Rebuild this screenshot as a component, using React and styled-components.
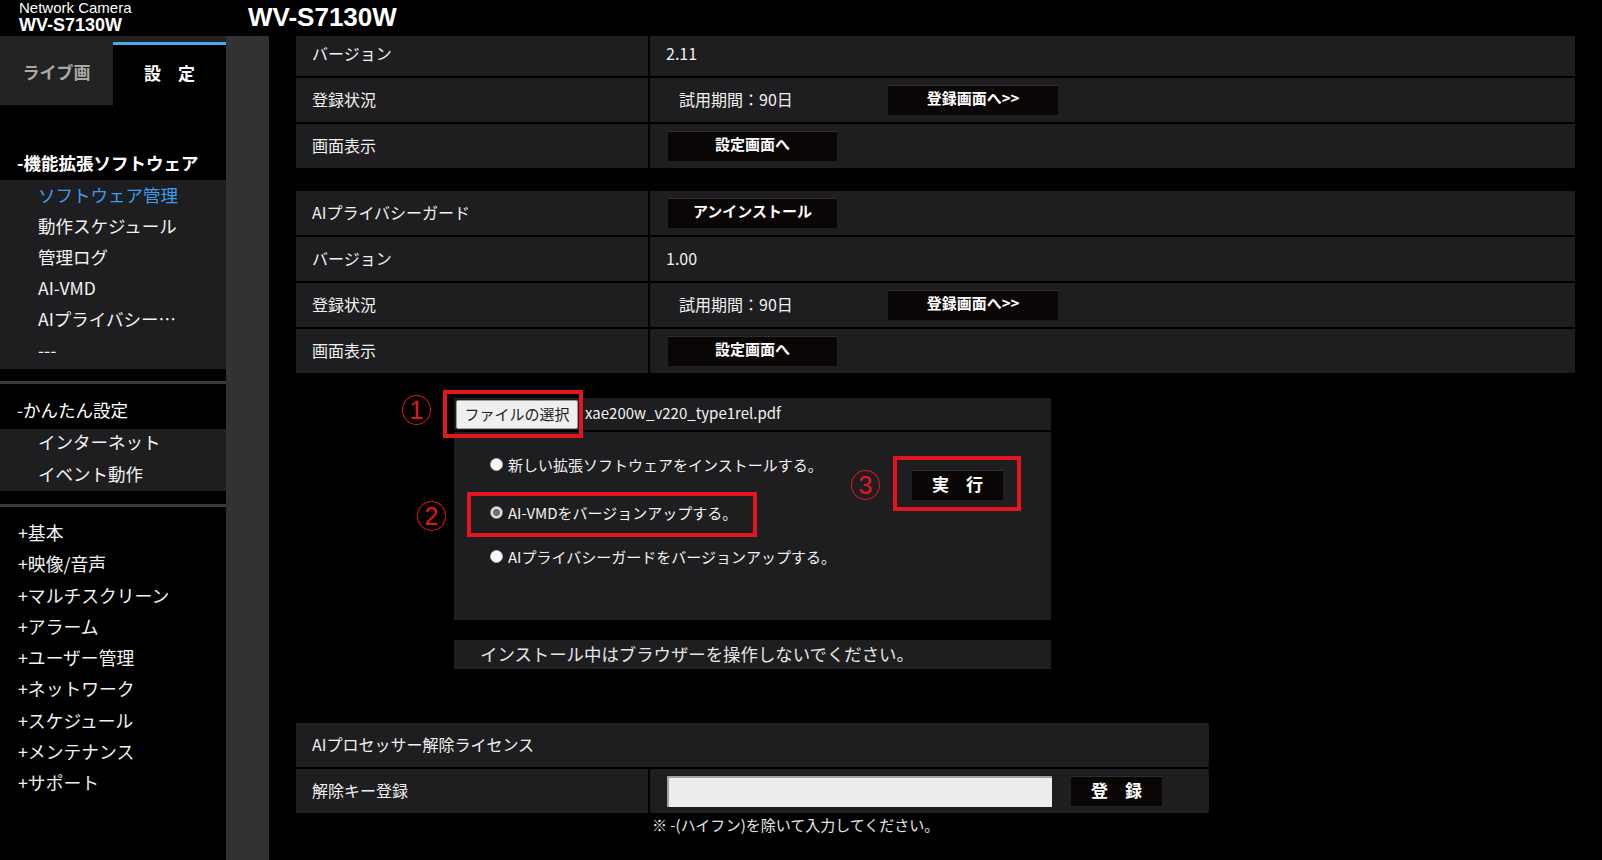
import React from "react";
import styled, { createGlobalStyle } from "styled-components";

const GlobalStyle = createGlobalStyle`
  html, body { margin: 0; padding: 0; background: #000; }
  body {
    font-family: "Noto Sans CJK JP", "Noto Sans", sans-serif;
    color: #f2f2f2;
  }
  * { box-sizing: border-box; }
`;

const RED = "#e3161f";
const CELL = "#1e1e20";

const Page = styled.div`
  height: 860px;
  display: flex;
  flex-direction: column;
  overflow: hidden;
  background: #000;
`;

const Header = styled.header`
  height: 36px;
  flex: none;
  display: flex;
  background: #000;
`;

const Brand = styled.div`
  width: 248px;
  padding-left: 19px;
  color: #fff;
  font-family: "Liberation Sans", Arial, sans-serif;
`;

const BrandSub = styled.div`
  font-size: 15px;
  line-height: 15px;
`;

const BrandModel = styled.div`
  margin-top: 1px;
  font-size: 18px;
  line-height: 18px;
  font-weight: bold;
`;

const Title = styled.h1`
  margin: 0;
  font-family: "Liberation Sans", Arial, sans-serif;
  font-size: 26px;
  line-height: 35px;
  font-weight: bold;
  color: #fff;
`;

const Body = styled.div`
  flex: 1;
  display: flex;
  min-height: 0;
`;

const Sidebar = styled.aside`
  width: 226px;
  flex: none;
  background: #000;
  display: flex;
  flex-direction: column;
`;

const TabBar = styled.div`
  display: flex;
  background: #222;
  padding-top: 6px;
`;

const Tab = styled.div`
  width: 113px;
  height: 63px;
  display: flex;
  align-items: center;
  justify-content: center;
  padding-bottom: ${(p) => (p.$active ? 6 : 4)}px;
  font-size: 17px;
  font-weight: bold;
  white-space: pre;
  background: ${(p) => (p.$active ? "#000" : "#222")};
  border-top: ${(p) => (p.$active ? "3px solid #4aa8ea" : "none")};
  color: ${(p) => (p.$active ? "#fff" : "#a9a9a9")};
`;

const SectionTitle = styled.div`
  padding: ${(p) => p.$pt}px 0 ${(p) => p.$pb}px 17px;
  font-size: 17.5px;
  line-height: 31px;
  font-weight: ${(p) => (p.$bold ? "bold" : "normal")};
  color: #fff;
  white-space: nowrap;
`;

const SubList = styled.div`
  background: ${CELL};
  padding-bottom: ${(p) => p.$pb || 0}px;
`;

const SubItem = styled.div`
  padding: 0 0 ${(p) => p.$lift || 2}px 38px;
  font-size: 17.5px;
  line-height: ${(p) => 31 - (p.$lift || 2)}px;
  white-space: nowrap;
  color: ${(p) => (p.$active ? "#3b9cec" : "#f2f2f2")};
`;

const Divider = styled.div`
  height: 3px;
  background: #3a3a3a;
  margin-top: ${(p) => p.$mt}px;
`;

const NavList = styled.div`
  padding-top: 10px;
`;

const NavItem = styled.div`
  padding-left: 18px;
  font-size: 17.8px;
  line-height: 31.3px;
  white-space: nowrap;
  color: #f2f2f2;
`;

const Gutter = styled.div`
  width: 43px;
  flex: none;
  background: #323232;
`;

const Main = styled.main`
  flex: 1;
  overflow: hidden;
  padding: 0 27px;
`;

const Scroll = styled.div`
  margin-top: -4px;
`;

const InfoTable = styled.div`
  display: grid;
  grid-template-columns: 352px 1fr;
  gap: 2px;
  width: ${(p) => (p.$w ? `${p.$w}px` : "auto")};
  margin-top: ${(p) => p.$mt || 0}px;
`;

const Cell = styled.div`
  background: ${CELL};
  height: 44px;
  display: flex;
  align-items: center;
  padding-left: 16px;
  font-size: 16px;
  color: #f2f2f2;
  white-space: nowrap;
  ${(p) => (p.$span ? "grid-column: 1 / -1;" : "")}
`;

const Text = styled.span`
  margin-bottom: 3px;
`;

const StatusText = styled.span`
  margin: 0 0 3px 13px;
  width: 209px;
`;

const DarkButton = styled.button`
  width: ${(p) => p.$w}px;
  height: 30px;
  margin-left: ${(p) => p.$ml || 0}px;
  padding: 0 0 6px;
  border: none;
  border-top: 1px solid #2e2e2e;
  background: #0a0606;
  color: #fff;
  font-family: "Noto Sans CJK JP", sans-serif;
  font-size: ${(p) => p.$fs || 15}px;
  font-weight: bold;
  white-space: pre;
  cursor: pointer;
`;

const UploadWrap = styled.div`
  position: relative;
  margin: 25px 0 0 158px;
  width: 597px;
`;

const FileRow = styled.div`
  height: 32px;
  background: ${CELL};
  display: flex;
  align-items: center;
  padding-left: 2px;
`;

const FileButton = styled.button`
  height: 29px;
  width: 122px;
  padding: 0 0 2px;
  background: #efefef;
  border: 1px solid #9a9a9a;
  border-radius: 2px;
  color: #222;
  font-family: "Noto Sans CJK JP", sans-serif;
  font-size: 15px;
`;

const FileName = styled.span`
  margin: 0 0 3px 7px;
  font-size: 15px;
  color: #f2f2f2;
`;

const Options = styled.div`
  margin-top: 2px;
  height: 188px;
  background: ${CELL};
  display: grid;
  grid-template-columns: 458px auto;
  align-items: start;
`;

const RadioCol = styled.div`
  padding: 22px 0 0 36px;
`;

const RadioRow = styled.label`
  display: flex;
  align-items: center;
  gap: 5px;
  height: 21px;
  margin-top: ${(p) => p.$mt || 0}px;
  font-size: 15px;
  color: #f2f2f2;
  white-space: nowrap;
`;

const Radio = styled.input.attrs({ type: "radio" })`
  appearance: none;
  margin: 0;
  width: 13px;
  height: 13px;
  flex: none;
  border-radius: 50%;
  border: 1px solid #b8b8b8;
  background: #fafafa;
  &:checked {
    border-color: #9a9a9a;
    background: radial-gradient(circle, #6f6f6f 0 3.2px, #e4e4e4 3.9px);
  }
`;

const ExecCol = styled.div`
  padding-top: 38px;
`;

const Notice = styled.div`
  margin: 20px 0 0 158px;
  width: 597px;
  height: 29px;
  background: ${CELL};
  padding-left: 26px;
  font-size: 17.4px;
  line-height: 27px;
  color: #e6e6e6;
  white-space: nowrap;
`;

const KeyInput = styled.input`
  width: 385px;
  height: 31px;
  margin-left: 1px;
  border: none;
  border-top: 2px solid #a0a0a0;
  border-left: 2px solid #a0a0a0;
  background: #ececec;
  outline: none;
`;

const Note = styled.div`
  margin: 2px 0 0 356px;
  font-size: 15px;
  line-height: 20px;
  color: #e6e6e6;
`;

const Highlight = styled.div`
  position: absolute;
  left: ${(p) => p.$x}px;
  top: ${(p) => p.$y}px;
  width: ${(p) => p.$w}px;
  height: ${(p) => p.$h}px;
  border: 4px solid ${RED};
  pointer-events: none;
`;

const Mark = styled.span`
  position: absolute;
  left: ${(p) => p.$x}px;
  top: ${(p) => p.$y}px;
  width: 29px;
  height: 30px;
  border: 1.5px solid ${RED};
  border-radius: 50%;
  display: flex;
  align-items: center;
  justify-content: center;
  color: ${RED};
  font-family: "Liberation Sans", Arial, sans-serif;
  font-size: 25px;
  line-height: 1;
`;

const subItems = [
  { t: "ソフトウェア管理", active: true },
  { t: "動作スケジュール" },
  { t: "管理ログ" },
  { t: "AI-VMD" },
  { t: "AIプライバシー…" },
  { t: "---" },
];

const navItems = [
  "+基本",
  "+映像/音声",
  "+マルチスクリーン",
  "+アラーム",
  "+ユーザー管理",
  "+ネットワーク",
  "+スケジュール",
  "+メンテナンス",
  "+サポート",
];

export default function App() {
  return (
    <>
      <GlobalStyle />
      <Page>
        <Header>
          <Brand>
            <BrandSub>Network Camera</BrandSub>
            <BrandModel>WV-S7130W</BrandModel>
          </Brand>
          <Title>WV-S7130W</Title>
        </Header>
        <Body>
          <Sidebar>
            <TabBar>
              <Tab>ライブ画</Tab>
              <Tab $active>{"設　定"}</Tab>
            </TabBar>
            <SectionTitle $pt={42} $pb={2} $bold>
              -機能拡張ソフトウェア
            </SectionTitle>
            <SubList $pb={3}>
              {subItems.map((s) => (
                <SubItem key={s.t} $active={s.active}>
                  {s.t}
                </SubItem>
              ))}
            </SubList>
            <Divider $mt={12} />
            <SectionTitle $pt={10} $pb={4}>
              -かんたん設定
            </SectionTitle>
            <SubList>
              <SubItem $lift={5}>インターネット</SubItem>
              <SubItem $lift={4}>イベント動作</SubItem>
            </SubList>
            <Divider $mt={13} />
            <NavList>
              {navItems.map((n) => (
                <NavItem key={n}>{n}</NavItem>
              ))}
            </NavList>
          </Sidebar>
          <Gutter />
          <Main>
            <Scroll>
              <InfoTable>
                <Cell><Text>バージョン</Text></Cell>
                <Cell><Text>2.11</Text></Cell>
                <Cell><Text>登録状況</Text></Cell>
                <Cell>
                  <StatusText>試用期間：90日</StatusText>
                  <DarkButton $w={170}>登録画面へ&gt;&gt;</DarkButton>
                </Cell>
                <Cell><Text>画面表示</Text></Cell>
                <Cell>
                  <DarkButton $w={169} $ml={2}>
                    設定画面へ
                  </DarkButton>
                </Cell>
              </InfoTable>

              <InfoTable $mt={23}>
                <Cell><Text>AIプライバシーガード</Text></Cell>
                <Cell>
                  <DarkButton $w={169} $ml={2}>
                    アンインストール
                  </DarkButton>
                </Cell>
                <Cell><Text>バージョン</Text></Cell>
                <Cell><Text>1.00</Text></Cell>
                <Cell><Text>登録状況</Text></Cell>
                <Cell>
                  <StatusText>試用期間：90日</StatusText>
                  <DarkButton $w={170}>登録画面へ&gt;&gt;</DarkButton>
                </Cell>
                <Cell><Text>画面表示</Text></Cell>
                <Cell>
                  <DarkButton $w={169} $ml={2}>
                    設定画面へ
                  </DarkButton>
                </Cell>
              </InfoTable>

              <UploadWrap>
                <FileRow>
                  <FileButton>ファイルの選択</FileButton>
                  <FileName>xae200w_v220_type1rel.pdf</FileName>
                </FileRow>
                <Options>
                  <RadioCol>
                    <RadioRow>
                      <Radio name="mode" />
                      新しい拡張ソフトウェアをインストールする。
                    </RadioRow>
                    <RadioRow $mt={27}>
                      <Radio name="mode" defaultChecked />
                      AI-VMDをバージョンアップする。
                    </RadioRow>
                    <RadioRow $mt={23}>
                      <Radio name="mode" />
                      AIプライバシーガードをバージョンアップする。
                    </RadioRow>
                  </RadioCol>
                  <ExecCol>
                    <DarkButton $w={91} $fs={17}>
                      {"実　行"}
                    </DarkButton>
                  </ExecCol>
                </Options>
                <Highlight $x={-11} $y={-8} $w={140} $h={48} />
                <Mark $x={-52} $y={-3}>1</Mark>
                <Highlight $x={13} $y={94} $w={290} $h={45} />
                <Mark $x={-37} $y={103}>2</Mark>
                <Highlight $x={439} $y={58} $w={128} $h={55} />
                <Mark $x={397} $y={72}>3</Mark>
              </UploadWrap>

              <Notice>インストール中はブラウザーを操作しないでください。</Notice>

              <InfoTable $w={913} $mt={54}>
                <Cell $span><Text>AIプロセッサー解除ライセンス</Text></Cell>
                <Cell><Text>解除キー登録</Text></Cell>
                <Cell>
                  <KeyInput type="text" />
                  <DarkButton $w={91} $ml={19} $fs={17}>
                    {"登　録"}
                  </DarkButton>
                </Cell>
              </InfoTable>
              <Note>※ -(ハイフン)を除いて入力してください。</Note>
            </Scroll>
          </Main>
        </Body>
      </Page>
    </>
  );
}
